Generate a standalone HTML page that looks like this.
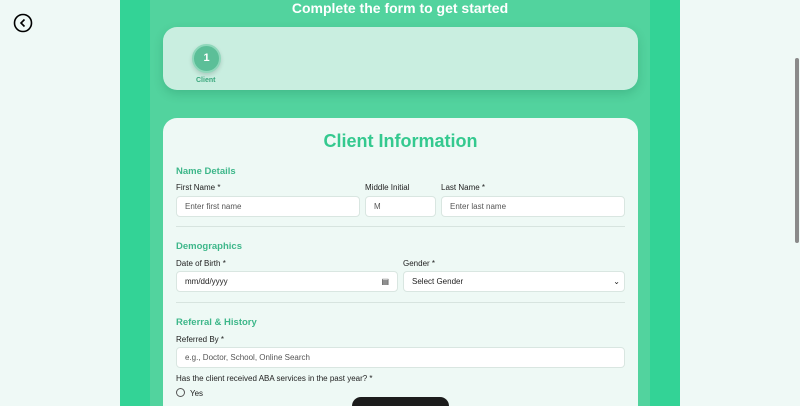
<!DOCTYPE html>
<html style="width:800px;height:406px;overflow:hidden"><head><style>
*{box-sizing:border-box;margin:0;padding:0}
body{width:800px;height:406px;overflow:hidden;background:#eff9f6;font-family:"Liberation Sans",sans-serif;position:relative}
.col{position:absolute;left:120px;top:0;width:560px;height:406px;background:#33d396}
.inner{position:absolute;left:150px;top:0;width:500px;height:406px;background:#52d39e}
.title{position:absolute;left:120px;width:560px;top:0;text-align:center;color:#fff;font-weight:bold;font-size:14px}
.step{position:absolute;left:163px;top:27px;width:475px;height:63px;background:#c9eee0;border-radius:14px;box-shadow:0 4px 10px rgba(0,80,50,.18)}
.circ{position:absolute;left:29px;top:17px;width:29px;height:29px;border-radius:50%;background:#5cbf98;border:2px solid #8fd8bb;color:#fff;font-weight:bold;font-size:11px;text-align:center;line-height:25px;box-shadow:0 2px 4px rgba(0,0,0,.15)}
.cl{position:absolute;left:33px;top:50px;font-size:7px;color:#3aa67c;font-weight:bold}
.card{position:absolute;left:163px;top:118px;width:475px;height:288px;background:#eef9f5;border-radius:14px 14px 0 0;overflow:hidden}
.h{position:absolute;font-size:18px;font-weight:bold;color:#34c98f;width:475px;text-align:center;top:13px}
.sec{position:absolute;left:13px;font-size:9.5px;font-weight:bold;color:#3eb78a}
.lab{position:absolute;font-size:8px;color:#222}
.in{position:absolute;height:21px;background:#fff;border:1px solid #d9e6e1;border-radius:4px;font-size:8px;color:#555;padding-left:8px;line-height:19px}
.hr{position:absolute;left:13px;width:449px;height:1px;background:#d7e4df}
</style></head><body>
<svg style="position:absolute;left:13px;top:13px" width="20" height="20" viewBox="0 0 20 20"><circle cx="10" cy="10" r="8.5" fill="none" stroke="#000" stroke-width="1.6"/><path d="M11.5 6.5 L8 10 L11.5 13.5" fill="none" stroke="#000" stroke-width="1.6"/></svg>
<div class="col"></div><div class="inner"></div>
<div class="title">Complete the form to get started</div>
<div class="step"><div class="circ">1</div><div class="cl">Client</div></div>
<div class="card">
<div class="h">Client Information</div>
<div class="sec" style="top:48px">Name Details</div>
<div class="lab" style="left:13px;top:65px">First Name *</div>
<div class="lab" style="left:202px;top:65px">Middle Initial</div>
<div class="lab" style="left:278px;top:65px">Last Name *</div>
<div class="in" style="left:13px;top:78px;width:184px">Enter first name</div>
<div class="in" style="left:202px;top:78px;width:71px">M</div>
<div class="in" style="left:278px;top:78px;width:184px">Enter last name</div>
<div class="hr" style="top:108px"></div>
<div class="sec" style="top:123px">Demographics</div>
<div class="lab" style="left:13px;top:141px">Date of Birth *</div>
<div class="lab" style="left:240px;top:141px">Gender *</div>
<div class="in" style="left:13px;top:153px;width:222px;color:#222">mm/dd/yyyy<span style="position:absolute;right:8px;top:0">&#9636;</span></div>
<div class="in" style="left:240px;top:153px;width:222px;color:#222">Select Gender<span style="position:absolute;right:4px;top:0">&#8964;</span></div>
<div class="hr" style="top:184px"></div>
<div class="sec" style="top:199px">Referral &amp; History</div>
<div class="lab" style="left:13px;top:217px">Referred By *</div>
<div class="in" style="left:13px;top:229px;width:449px">e.g., Doctor, School, Online Search</div>
<div class="lab" style="left:13px;top:256px">Has the client received ABA services in the past year? *</div>
<div style="position:absolute;left:13px;top:270px;width:9px;height:9px;border:1px solid #555;border-radius:50%"></div>
<div class="lab" style="left:27px;top:271px">Yes</div>
</div>
<div style="position:absolute;left:352px;top:397px;width:97px;height:9px;background:#1c1c1c;border-radius:10px 10px 0 0"></div>
<div style="position:absolute;left:795px;top:58px;width:4px;height:185px;background:#8a8a8a;border-radius:2px"></div>
</body></html>
